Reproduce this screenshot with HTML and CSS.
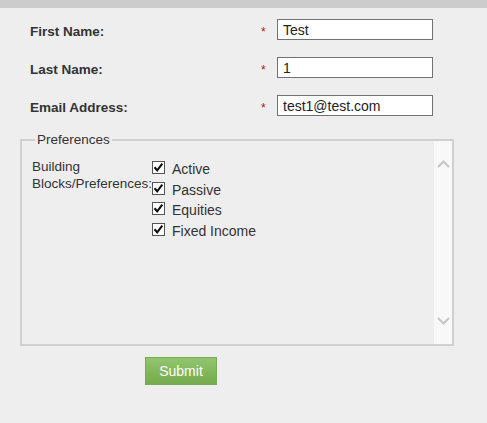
FILE: index.html
```html
<!DOCTYPE html>
<html>
<head>
<meta charset="utf-8">
<link rel="stylesheet" href="styles.css">
</head>
<body>
<div class="topbar"></div>
<form class="form">
  <div class="row">
    <label class="label">First Name:</label>
    <span class="req">*</span>
    <input class="field" type="text" value="Test">
  </div>
  <div class="row">
    <label class="label">Last Name:</label>
    <span class="req">*</span>
    <input class="field" type="text" value="1">
  </div>
  <div class="row">
    <label class="label">Email Address:</label>
    <span class="req">*</span>
    <input class="field" type="text" value="test1@test.com">
  </div>

  <fieldset class="prefs">
    <legend class="legend">Preferences</legend>
    <div class="prefs-body">
      <div class="bb-label">Building Blocks/Preferences:</div>
      <div class="checks">
        <div class="check"><span class="box"><svg viewBox="0 0 13 13" width="13" height="13"><path d="M2.5 6.2 L5.2 9.3 L10.3 2.6" fill="none" stroke="#111" stroke-width="2.1"/></svg></span><span class="check-text">Active</span></div>
        <div class="check"><span class="box"><svg viewBox="0 0 13 13" width="13" height="13"><path d="M2.5 6.2 L5.2 9.3 L10.3 2.6" fill="none" stroke="#111" stroke-width="2.1"/></svg></span><span class="check-text">Passive</span></div>
        <div class="check"><span class="box"><svg viewBox="0 0 13 13" width="13" height="13"><path d="M2.5 6.2 L5.2 9.3 L10.3 2.6" fill="none" stroke="#111" stroke-width="2.1"/></svg></span><span class="check-text">Equities</span></div>
        <div class="check"><span class="box"><svg viewBox="0 0 13 13" width="13" height="13"><path d="M2.5 6.2 L5.2 9.3 L10.3 2.6" fill="none" stroke="#111" stroke-width="2.1"/></svg></span><span class="check-text">Fixed Income</span></div>
      </div>
    </div>
    <div class="scrollbar">
      <svg class="arrow-up" viewBox="0 0 13 9" width="13" height="9"><path d="M1 8 L6.5 2.5 L12 8" fill="none" stroke="#c6c6c6" stroke-width="2.2"/></svg>
      <svg class="arrow-down" viewBox="0 0 13 9" width="13" height="9"><path d="M1 1 L6.5 6.5 L12 1" fill="none" stroke="#c6c6c6" stroke-width="2.2"/></svg>
    </div>
  </fieldset>

  <div class="actions">
    <button class="submit" type="button">Submit</button>
  </div>
</form>
</body>
</html>
```
FILE: styles.css
```css
html, body {
  margin: 0;
  padding: 0;
  background: #eeeeee;
  font-family: "Liberation Sans", Arial, sans-serif;
  color: #333333;
}
.topbar {
  height: 8px;
  background: #cccccc;
}
.form {
  margin: 0;
  padding: 11px 0 0 0;
}
.row {
  display: flex;
  align-items: center;
  height: 21px;
  margin-bottom: 17px;
  padding-left: 30px;
}
.label {
  width: 231px;
  font-size: 13.5px;
  font-weight: bold;
  color: #333333;
  padding-top: 3px;
}
.req {
  width: 16px;
  color: #b8141e;
  font-size: 12px;
  font-weight: normal;
  padding-top: 5px;
}
.field {
  box-sizing: border-box;
  width: 156px;
  height: 21px;
  border: 1px solid #727272;
  background: #ffffff;
  padding: 0 0 0 5px;
  margin: 0;
  font-family: "Liberation Sans", Arial, sans-serif;
  font-size: 14px;
  color: #222222;
  outline: none;
}
.prefs {
  position: relative;
  box-sizing: border-box;
  width: 434px;
  margin: -1px 0 0 20px;
  padding: 0 0 0 10px;
  border: 2px solid #d0d0d0;
}
.legend {
  font-size: 13.5px;
  line-height: 15px;
  padding: 0 2px;
  margin-left: 3px;
  color: #333333;
}
.prefs-body {
  display: flex;
  height: 197px;
  box-sizing: border-box;
  padding-top: 11px;
}
.bb-label {
  width: 120px;
  font-size: 13.5px;
  line-height: 17px;
  color: #333333;
}
.checks {
  display: flex;
  flex-direction: column;
  margin-top: -1px;
}
.check {
  display: flex;
  align-items: center;
  height: 20.7px;
}
.box {
  box-sizing: border-box;
  width: 13px;
  height: 13px;
  border: 1px solid #555555;
  background: #ffffff;
  position: relative;
}
.box svg {
  position: absolute;
  left: -1px;
  top: -1px;
}
.check-text {
  margin-left: 7px;
  font-size: 14px;
  color: #333333;
  padding-top: 3px;
}
.scrollbar {
  position: absolute;
  right: 0;
  top: -6px;
  bottom: 0;
  width: 18px;
  background: #f8f8f8;
}
.arrow-up {
  position: absolute;
  left: 3px;
  top: 18px;
}
.arrow-down {
  position: absolute;
  left: 3px;
  bottom: 18px;
}
.actions {
  padding: 11px 0 0 145px;
}
.submit {
  box-sizing: border-box;
  width: 72px;
  height: 28px;
  border: 1px solid #78ae52;
  background: linear-gradient(#93c46f, #74ab4c);
  color: #ffffff;
  font-family: "Liberation Sans", Arial, sans-serif;
  font-size: 14px;
  padding: 0;
  margin: 0;
}
```
